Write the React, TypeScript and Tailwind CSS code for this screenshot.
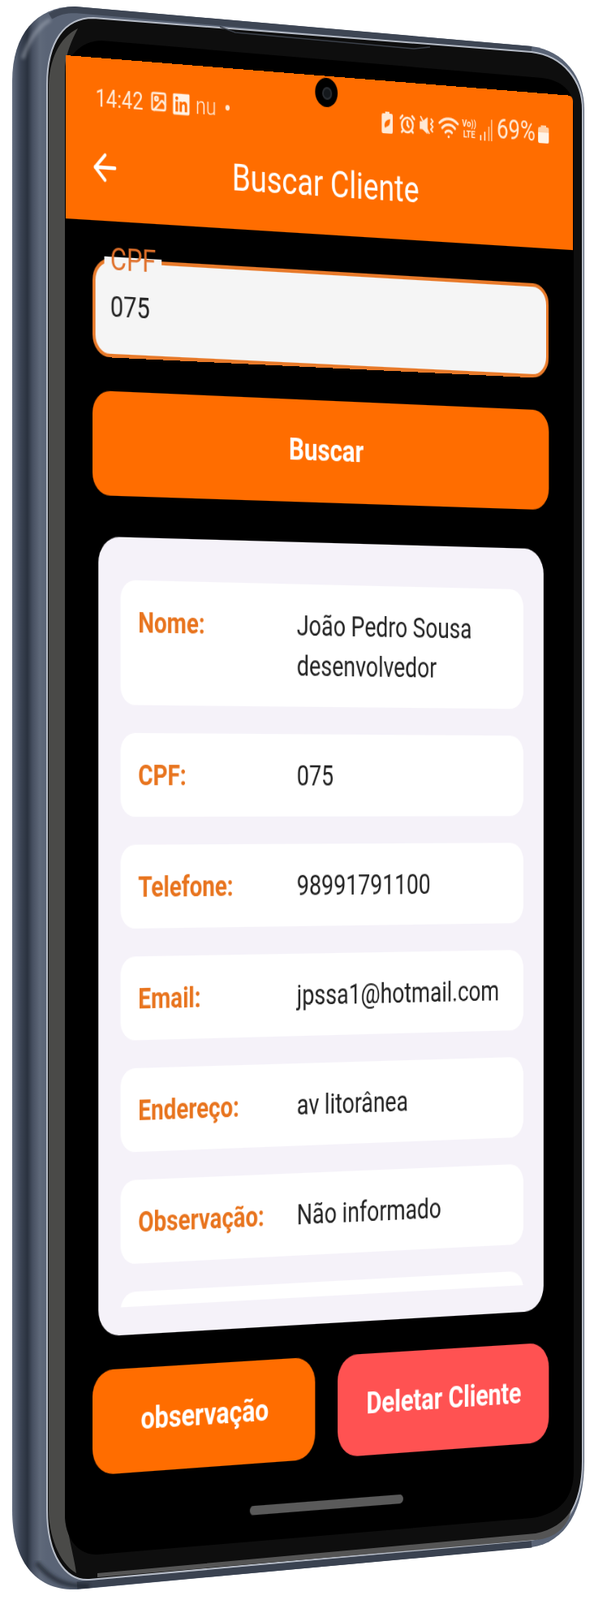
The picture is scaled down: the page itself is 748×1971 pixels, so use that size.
import React from 'react';
import { AlarmClock, ArrowLeft, Image as ImageIcon, Wifi } from 'lucide-react';
import { FaLinkedin } from 'react-icons/fa';

const SCREEN_W = 360;
const SCREEN_H = 800;

// corners of the display in the picture: TL, TR, BR, BL
const QUAD = [
  [81, 68],
  [706, 118],
  [706, 1866],
  [81, 1917],
];

function quadToMatrix(w: number, h: number, q: number[][]) {
  const [[x0, y0], [x1, y1], [x2, y2], [x3, y3]] = q;
  const dx1 = x1 - x2;
  const dx2 = x3 - x2;
  const dx3 = x0 - x1 + x2 - x3;
  const dy1 = y1 - y2;
  const dy2 = y3 - y2;
  const dy3 = y0 - y1 + y2 - y3;
  const det = dx1 * dy2 - dx2 * dy1;
  const g = (dx3 * dy2 - dx2 * dy3) / det;
  const k = (dx1 * dy3 - dx3 * dy1) / det;
  const a = x1 - x0 + g * x1;
  const b = x3 - x0 + k * x3;
  const d = y1 - y0 + g * y1;
  const e = y3 - y0 + k * y3;
  return `matrix3d(${[a / w, d / w, 0, g / w, b / h, e / h, 0, k / h, 0, 0, 1, 0, x0, y0, 0, 1].join(',')})`;
}

const rows = [
  { label: 'Nome:', value: ['João Pedro Sousa', 'desenvolvedor'] },
  { label: 'CPF:', value: ['075'] },
  { label: 'Telefone:', value: ['98991791100'] },
  { label: 'Email:', value: ['jpssa1@hotmail.com'] },
  { label: 'Endereço:', value: ['av litorânea'] },
  { label: 'Observação:', value: ['Não informado'] },
];

const PhoneFrame = () => (
  <svg viewBox="0 0 748 1971" className="absolute inset-0 w-[748px] h-[1971px]">
    <defs>
      <linearGradient id="body" gradientUnits="userSpaceOnUse" x1="14" y1="0" x2="58" y2="0">
        <stop offset="0" stopColor="#6a7486" />
        <stop offset="0.1" stopColor="#566072" />
        <stop offset="0.25" stopColor="#3c4555" />
        <stop offset="0.45" stopColor="#2a323f" />
        <stop offset="0.6" stopColor="#485162" />
        <stop offset="0.8" stopColor="#5f697a" />
        <stop offset="1" stopColor="#5a6476" />
      </linearGradient>
      <filter id="soft">
        <feGaussianBlur stdDeviation="2" />
      </filter>
    </defs>
    {/* metal body */}
    <path
      d="M15 100 C15 42 45 8 92 8 L655 57 C695 62 720 95 720 135 L720 1800 C720 1860 697 1900 655 1906 L95 1958 C45 1960 15 1925 15 1860 Z"
      fill="url(#body)"
    />
    {/* darker rails along top and bottom, highlight on the corner */}
    <path d="M62 20 C72 14 82 12 92 12 L655 61" fill="none" stroke="#3e4654" strokeWidth="8" />
    <path d="M95 1953 L655 1902" fill="none" stroke="#3a4250" strokeWidth="9" />
    <path d="M28 72 C36 48 48 32 62 24" fill="none" stroke="#aab1bd" strokeWidth="4" opacity="0.6" filter="url(#soft)" />
    <path d="M45 1925 C62 1946 80 1955 110 1954" fill="none" stroke="#1d222c" strokeWidth="6" opacity="0.7" filter="url(#soft)" />
    {/* glass */}
    <path
      d="M58 105 C58 50 80 22 115 22 L655 64 C695 69 718 100 718 135 L718 1800 C718 1855 695 1890 655 1897 L110 1946 C80 1948 58 1915 58 1860 Z"
      fill="#0e0e0e"
      stroke="#b6bcc7"
      strokeWidth="2"
    />
    {/* earpiece slit */}
    <path d="M271 33 L290 40 L510 60 L530 58" fill="none" stroke="#3a3f48" strokeWidth="1.5" />
    {/* grey reflections on the glass */}
    <path
      d="M60 110 C60 72 74 46 96 35 C88 50 82 65 80 82 L80 1860 C84 1895 92 1920 94 1938 C72 1925 60 1890 60 1860 Z"
      fill="#4a4a48"
    />
    <path
      d="M120 1938 L660 1889 C680 1885 695 1875 704 1860 C700 1880 685 1895 660 1897 L120 1943 Z"
      fill="#555555"
    />
    {/* display */}
    <path
      d="M80 92 C82 70 100 50 125 50 L668 96 C692 99 707 112 707 135 L707 1812 C707 1845 690 1865 655 1870 L120 1915 C100 1916 82 1900 80 1870 Z"
      fill="#000000"
    />
  </svg>
);

const BatterySaver = () => (
  <svg viewBox="0 0 8 12" className="w-[9px] h-[12px]" fill="currentColor">
    <path d="M2.5 0h3v1H7a1 1 0 0 1 1 1v9a1 1 0 0 1-1 1H1a1 1 0 0 1-1-1V2a1 1 0 0 1 1-1h1.5z" />
    <path d="M2 8c0-2.5 1.500-3.500 4-4 0 2.500-.5 4-2.500 4.200L2.500 9z" fill="#ff6d00" />
  </svg>
);

const Mute = () => (
  <svg viewBox="0 0 11 11" className="w-[11px] h-[12px]" fill="none" stroke="currentColor">
    <path d="M0 3.500h2L5.500 1v9L2 7.500H0z" fill="currentColor" strokeWidth="0.4" />
    <path d="M0.500 .5 L7 10" strokeWidth="0.9" />
    <path d="M8 1.500l1.500 1.500L8 4.500l1.500 1.500L8 7.500l1.500 1.500" strokeWidth="1" />
  </svg>
);

const Signal = () => (
  <div className="w-[9px] h-[12px] flex items-end justify-between">
    <span className="w-px h-[3px] bg-[#ffe9d6]" />
    <span className="w-px h-[5px] bg-[#ffe9d6]" />
    <span className="w-px h-[8px] bg-[#ffbf8c]" />
    <span className="w-px h-[12px] bg-[#ffbf8c]" />
  </div>
);

const StatusBar = () => (
  <div className="relative h-[32px] pt-[7px] pl-[20px] pr-[18px] flex items-start justify-between text-[#ffe9d6]">
    <div className="h-[28px] flex items-center">
      <span className="text-[13px] leading-none">14:42</span>
      <ImageIcon size={12} strokeWidth={2.6} className="ml-[5px]" />
      <FaLinkedin size={13} className="ml-[3px] text-[#fff3e6]" />
      <span className="ml-[3px] text-[13px] leading-none font-light">nu</span>
      <span className="ml-[6px] w-[3px] h-[3px] rounded-full bg-[#ffe9d6]" />
    </div>
    <div className="mt-[2px] h-[28px] flex items-center">
      <BatterySaver />
      <AlarmClock size={12} strokeWidth={2.6} className="ml-[4px]" />
      <span className="ml-[3px]">
        <Mute />
      </span>
      <Wifi size={16} strokeWidth={2.2} className="ml-[2px]" />
      <span className="ml-[2px] flex flex-col items-center text-[5.5px] leading-[6px] font-bold">
        <span>Vo))</span>
        <span>LTE</span>
      </span>
      <span className="ml-[3px]">
        <Signal />
      </span>
      <span className="ml-[3px] text-[15.5px] leading-none">69%</span>
      <span className="ml-[2px] w-[8px] h-[10px] flex flex-col items-center">
        <span className="w-[4px] h-[1px] bg-[#ffd0a8]" />
        <span className="w-[8px] h-[3px] rounded-t-[1px] bg-[#ffd0a8]" />
        <span className="w-[8px] h-[6px] rounded-b-[1px] bg-[#fff3e6]" />
      </span>
    </div>
    {/* front camera */}
    <div className="absolute top-[1px] left-[172px] w-4 h-4 rounded-full bg-black flex items-center justify-center">
      <span className="w-[7px] h-[7px] rounded-full bg-[#14181c] border border-[#2a2e33]" />
    </div>
  </div>
);

const Row = ({ label, value }: { label: string; value: string[] }) => (
  <div className="shrink-0 flex bg-white rounded-[10px] py-[11.5px] pl-[12px] pr-[8px] leading-[22px] text-[15.5px]">
    <div className="w-[110px] shrink-0 font-bold text-[#e8741e]">{label}</div>
    <div className="text-[#222222]">
      {value.map((line) => (
        <div key={line}>{line}</div>
      ))}
    </div>
  </div>
);

export default function App() {
  return (
    <div className="relative w-[748px] h-[1971px] bg-white overflow-hidden [font-family:Roboto,sans-serif]">
      <PhoneFrame />
      <div
        className="absolute top-0 left-0 w-[360px] h-[800px] origin-top-left flex flex-col"
        style={{ transform: quadToMatrix(SCREEN_W, SCREEN_H, QUAD) }}
      >
        <header className="h-[87px] shrink-0 bg-[#ff6d00] rounded-tr-[3px]">
          <StatusBar />
          <div className="relative h-[55px] flex items-center justify-center text-white">
            <ArrowLeft size={23} strokeWidth={2} className="absolute left-[14.5px] top-[15px]" />
            <span className="text-[20.7px] font-normal leading-none">Buscar Cliente</span>
          </div>
        </header>

        <main className="flex-1 flex flex-col px-[18px]">
          <div className="relative mt-[19.5px] h-[53px] shrink-0 flex items-center pl-[10px] bg-[#f5f5f5] border-[2.5px] border-[#e87a2a] rounded-[12px]">
            <span className="absolute -top-[3px] left-[6px] w-[39px] h-[4px] bg-[#f5f5f5]" />
            <span className="absolute -top-[12px] left-[10px] text-[17px] leading-[20px] text-[#e0702a]">CPF</span>
            <span className="text-base text-[#222222]">075</span>
          </div>

          <button className="mt-[18.5px] h-[56px] shrink-0 bg-[#ff6d00] rounded-[12px] text-[17px] font-bold text-white">
            Buscar
          </button>

          <section className="mt-[22px] mx-[4px] h-[428px] shrink-0 flex flex-col bg-[#f5f2f9] rounded-[14px] pt-[23px] pb-[15px] px-[15px]">
            <div className="flex-1 overflow-hidden flex flex-col gap-[15px]">
              {rows.map((r) => (
                <Row key={r.label} label={r.label} value={r.value} />
              ))}
              <div className="shrink-0 h-[45px] bg-white rounded-[10px]" />
            </div>
          </section>

          <div className="mt-[18px] h-[56px] shrink-0 flex gap-[16px]">
            <button className="flex-1 bg-[#ff6d00] rounded-[14px] text-[17px] font-bold text-white">observação</button>
            <button className="flex-1 bg-[#ff5252] rounded-[14px] text-[17px] font-bold text-white">Deletar Cliente</button>
          </div>

          <div className="mt-[23px] self-center w-[109px] h-[5px] shrink-0 rounded-full bg-[#5a5a5a]" />
        </main>
      </div>
    </div>
  );
}
